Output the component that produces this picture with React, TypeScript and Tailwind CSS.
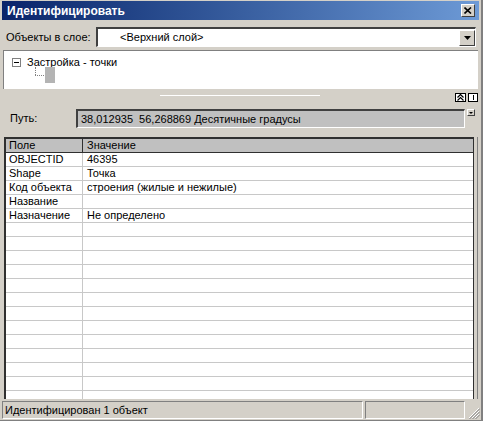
import React from "react";

const rows: [string, string][] = [
  ["OBJECTID", "46395"],
  ["Shape", "Точка"],
  ["Код объекта", "строения (жилые и нежилые)"],
  ["Название", ""],
  ["Назначение", "Не определено"],
];

export default function App() {
  const empty = Array.from({ length: 14 }, () => ["", ""] as [string, string]);
  const all = [...rows, ...empty];
  return (
    <div
      className="w-[483px] h-[421px] bg-[#d4d0c8] flex flex-col text-[11px] text-black overflow-hidden border-r-[2px] border-b-[1px] border-[#808080]"
      style={{ fontFamily: '"Liberation Sans", Arial, sans-serif' }}
    >
      {/* Title bar */}
      <div className="shrink-0 mx-[2px] mt-[1px] h-[19px] flex items-center justify-between bg-gradient-to-r from-[#0a246a] to-[#6d9ad6] pl-[5px] pr-[4px]">
        <span className="text-white font-bold text-[12px] leading-none">Идентифицировать</span>
        <div className="w-[14px] h-[13px] bg-[#d4d0c8] border-t border-l border-white border-r border-b border-r-[#404040] border-b-[#404040] flex items-center justify-center">
          <svg width="8" height="7" viewBox="0 0 8 7">
            <path d="M0.5 0.5 L7 6.5 M7 0.5 L0.5 6.5" stroke="black" strokeWidth="1.6" />
          </svg>
        </div>
      </div>

      {/* Layer selector */}
      <div className="shrink-0 flex items-center mt-[7px] pl-[6px] pr-[5px] h-[20px]">
        <span className="w-[90px] shrink-0">Объекты в слое:</span>
        <div className="flex-1 h-[20px] bg-white border-t-[2px] border-l-[2px] border-t-[#404040] border-l-[#404040] border-b border-r border-b-white border-r-white flex items-center">
          <span className="flex-1 pl-[22px]">&lt;Верхний слой&gt;</span>
          <div className="w-[16px] h-[16px] bg-[#d4d0c8] border-t border-l border-white border-r border-b border-r-[#404040] border-b-[#404040] flex items-center justify-center">
            <svg width="7" height="4" viewBox="0 0 7 4">
              <path d="M0 0 H7 L3.5 4 Z" fill="black" />
            </svg>
          </div>
        </div>
      </div>

      {/* Tree */}
      <div className="shrink-0 mx-[3px] mt-[3px] h-[39px] bg-white border-l border-t border-[#808080] relative">
        <div className="flex items-center absolute left-[8px] top-[3px]">
          <div className="w-[9px] h-[9px] border border-[#808080] flex items-center justify-center mr-[6px]">
            <div className="w-[5px] h-[1px] bg-black" />
          </div>
          <span>Застройка - точки</span>
        </div>
        <div className="absolute left-[31px] top-[16px] w-[1px] h-[8px] border-l border-dotted border-[#808080]" />
        <div className="absolute left-[31px] top-[24px] w-[9px] h-[1px] border-t border-dotted border-[#808080]" />
        <div className="absolute left-[41px] top-[16px] w-[10px] h-[16px] bg-[#b4b4b4]" />
      </div>

      {/* Splitter */}
      <div className="shrink-0 h-[20px] relative">
        <div className="absolute left-[160px] top-[6px] w-[160px] h-[1px] bg-white" />
        <div className="absolute right-[3px] top-[4px] flex gap-[2px]">
          <div className="w-[11px] h-[9px] bg-white border border-black flex items-center justify-center">
            <svg width="7" height="7" viewBox="0 0 7 7">
              <path d="M0.5 3.5 L3.5 0.5 L6.5 3.5 M0.5 6.5 L3.5 3.5 L6.5 6.5" stroke="black" strokeWidth="1.2" fill="none" />
            </svg>
          </div>
          <div className="w-[10px] h-[9px] bg-white border border-black flex items-center justify-center">
            <div className="w-[1px] h-[5px] bg-black" />
          </div>
        </div>
      </div>

      {/* Path */}
      <div className="shrink-0 flex items-center h-[19px] pl-[10px] pr-[6px]">
        <span className="w-[66px] shrink-0">Путь:</span>
        <div className="w-[389px] h-[19px] bg-[#c0c0c0] border-t-[2px] border-l-[2px] border-t-[#404040] border-l-[#404040] border-b border-r border-b-white border-r-white flex items-center pl-[3px]">
          38,012935&nbsp;&nbsp;56,268869 Десятичные градусы
        </div>
        <div className="ml-auto self-start w-[8px] h-[7px] bg-[#d4d0c8] border border-t-white border-l-white border-r-[#404040] border-b-[#404040] flex items-center justify-center">
          <svg width="4" height="2" viewBox="0 0 4 2"><path d="M0 0 H4 L2 2 Z" fill="black" /></svg>
        </div>
      </div>

      {/* Table */}
      <div className="flex flex-1 min-h-0 mt-[9px] mb-[2px] ml-[4px] mr-[3px]">
        <div className="flex-1 bg-white border-t-[2px] border-l-[2px] border-[#303030] border-r border-r-[#303030] overflow-hidden flex flex-col">
          <div className="flex h-[14px] bg-[#c0c0c0] border-b border-[#303030] shrink-0">
            <div className="w-[77px] pl-[3px] border-r border-[#303030] leading-[13px]">Поле</div>
            <div className="flex-1 pl-[4px] leading-[13px]">Значение</div>
          </div>
          {all.map(([k, v], i) => (
            <div key={i} className="flex h-[14px] border-b border-[#c8c8c8] shrink-0">
              <div className="w-[77px] pl-[3px] border-r border-[#c8c8c8] leading-[13px]">{k}</div>
              <div className="flex-1 pl-[4px] leading-[13px]">{v}</div>
            </div>
          ))}
        </div>
        <div className="w-[4px] border-r border-[#808080]" />
      </div>

      {/* Status bar */}
      <div className="shrink-0 h-[19px] flex items-stretch pl-[2px] pr-[1px] pb-[1px] gap-[2px]">
        <div className="w-[361px] border-t border-l border-[#808080] border-b border-r border-b-white border-r-white flex items-center pl-[2px]">
          Идентифицирован 1 объект
        </div>
        <div className="w-[100px] border-t border-l border-[#808080] border-b border-r border-b-white border-r-white" />
        <div className="flex-1 relative">
          <svg className="absolute right-0 bottom-0" width="12" height="12" viewBox="0 0 12 12">
            <path d="M11 1 L1 11 M11 4 L4 11 M11 7 L7 11" stroke="white" strokeWidth="1" />
            <path d="M12 1.5 L1.5 12 M12 4.5 L4.5 12 M12 7.5 L7.5 12" stroke="#808080" strokeWidth="1" />
          </svg>
        </div>
      </div>
    </div>
  );
}
